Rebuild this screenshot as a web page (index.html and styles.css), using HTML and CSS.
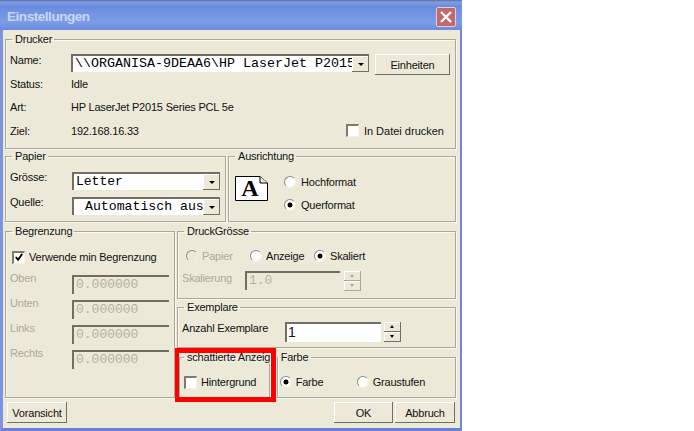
FILE: index.html
```html
<!DOCTYPE html>
<html lang="de">
<head>
<meta charset="utf-8">
<title>Einstellungen</title>
<link rel="stylesheet" href="styles.css">
</head>
<body>
<div class="window">
  <div class="titlebar">
    <span class="title">Einstellungen</span>
    <span class="close"><svg width="14" height="14" viewBox="0 0 14 14"><path d="M2 2 12 12M12 2 2 12" stroke="#fff" stroke-width="2.4" fill="none"/></svg></span>
  </div>
  <div class="content">
    <fieldset class="group drucker">
      <legend>Drucker</legend>
      <div class="drucker-grid">
        <span class="lbl lift">Name:</span>
        <div class="name-row">
          <div class="combo name-combo"><span class="combo-text mono14">\\ORGANISA-9DEAA6\HP LaserJet P2015</span><span class="arrow"><i class="tri"></i></span></div>
          <span class="btn einheiten">Einheiten</span>
        </div>
        <span class="lbl up1">Status:</span><span class="up1">Idle</span>
        <span class="lbl up1">Art:</span><span class="up1">HP LaserJet P2015 Series PCL 5e</span>
        <span class="lbl">Ziel:</span>
        <div class="ziel-row"><span>192.168.16.33</span><span class="check-item datei"><i class="check"></i>In Datei drucken</span></div>
      </div>
    </fieldset>
    <div class="row-two">
      <fieldset class="group papier">
        <legend>Papier</legend>
        <div class="papier-grid">
          <span class="lbl lift">Grösse:</span>
          <div class="combo paper-combo"><span class="combo-text mono13">Letter</span><span class="arrow"><i class="tri"></i></span></div>
          <span class="lbl lift">Quelle:</span>
          <div class="combo paper-combo"><span class="combo-text mono13 indent">Automatisch aus</span><span class="arrow"><i class="tri"></i></span></div>
        </div>
      </fieldset>
      <fieldset class="group ausrichtung">
        <legend>Ausrichtung</legend>
        <div class="aus-row">
          <svg class="page-icon" width="33" height="25" viewBox="0 0 33 25"><path d="M.5.5H25L32.5 7V24.5H.5Z" fill="#fff" stroke="#000"/><path d="M25 .5V7H32.5" fill="#ece9d8" stroke="#000"/><text x="15" y="20" text-anchor="middle" class="page-a">A</text></svg>
          <div class="aus-options">
            <span class="radio-item"><i class="radio"></i>Hochformat</span>
            <span class="radio-item"><i class="radio on"></i>Querformat</span>
          </div>
        </div>
      </fieldset>
    </div>
    <div class="row-three">
      <fieldset class="group begrenzung">
        <legend>Begrenzung</legend>
        <div class="check-item min"><i class="check checked"><svg width="11" height="11" viewBox="0 0 11 11"><path d="M2 5 4.5 8 9 1.5" stroke="#000" stroke-width="2" fill="none"/></svg></i>Verwende min Begrenzung</div>
        <div class="bounds">
          <span class="lbl lift off">Oben</span><span class="field off-field">0.000000</span>
          <span class="lbl lift off">Unten</span><span class="field off-field">0.000000</span>
          <span class="lbl lift off">Links</span><span class="field off-field">0.000000</span>
          <span class="lbl lift off">Rechts</span><span class="field off-field">0.000000</span>
        </div>
      </fieldset>
      <div class="right-col">
        <fieldset class="group druck">
          <legend>DruckGrösse</legend>
          <div class="druck-radios">
            <span class="radio-item off w-papier"><i class="radio dis"></i>Papier</span>
            <span class="radio-item w-anzeige"><i class="radio"></i>Anzeige</span>
            <span class="radio-item"><i class="radio on"></i>Skaliert</span>
          </div>
          <div class="skal-row">
            <span class="lbl off skal-lbl">Skalierung</span>
            <span class="field off-field skal">1.0</span>
            <span class="spin dis-spin"><i class="up"></i><i class="down"></i></span>
          </div>
        </fieldset>
        <fieldset class="group exemplare">
          <legend>Exemplare</legend>
          <div class="ex-row">
            <span class="ex-lbl">Anzahl Exemplare</span>
            <span class="field ex-field">1</span>
            <span class="spin"><i class="up"></i><i class="down"></i></span>
          </div>
        </fieldset>
        <div class="bottom-row">
          <fieldset class="group schatt">
            <legend>schattierte Anzeig</legend>
            <span class="check-item hg"><i class="check"></i>Hintergrund</span>
          </fieldset>
          <fieldset class="group farbe">
            <legend>Farbe</legend>
            <div class="farbe-row">
              <span class="radio-item w-farbe"><i class="radio on"></i>Farbe</span>
              <span class="radio-item"><i class="radio"></i>Graustufen</span>
            </div>
          </fieldset>
        </div>
      </div>
    </div>
    <div class="footer">
      <span class="btn voransicht">Voransicht</span>
      <div class="footer-right">
        <span class="btn ok">OK</span>
        <span class="btn abbruch">Abbruch</span>
      </div>
    </div>
  </div>
  <div class="highlight"></div>
</div>
</body>
</html>
```
FILE: styles.css
```css
* { box-sizing: border-box; }
html, body { margin: 0; background: #fff; }
body { font: 11px/14px "Liberation Sans", Arial, sans-serif; letter-spacing: -.2px; color: #111; }
i { display: block; font-style: normal; }

.window {
  position: relative;
  width: 462px;
  height: 431px;
  background: #ece9d8;
  border-left: 3px solid #7c93e0;
  border-right: 2px solid #6f86d8;
  border-bottom: 3px solid #6a80d4;
}
.titlebar {
  height: 30px;
  margin-left: -3px;
  margin-right: -2px;
  display: flex;
  align-items: center;
  justify-content: space-between;
  padding: 3px 6px 0 7px;
  background: linear-gradient(#5f6f95 0, #7f9ce6 2px, #6a8ce0 6px, #7b9de6 22px, #6c8ade 30px);
}
.title { font: bold 13.5px "Liberation Sans", Arial, sans-serif; letter-spacing: -.45px; color: #c9d8f2; }
.close {
  width: 20px; height: 20px;
  display: flex; align-items: center; justify-content: center;
  background: #c0696f;
  border: 1px solid #e2cdd6;
  border-radius: 2px;
}
.content { padding: 2px 4px 0 2px; }

.group {
  margin: 0; padding: 0; min-width: 0;
  border: 1px solid #aca899;
  box-shadow: inset 1px 1px 0 #f8f7f0, 1px 1px 0 #f8f7f0;
}
.group legend { margin-left: 6px; padding: 0 2px 0 3px; height: 14px; line-height: 14px; white-space: nowrap; }

.lbl { padding-left: 4px; }
.lift { position: relative; top: -4px; }
.up1 { position: relative; top: -1px; }
.off { color: #aca899; }

.drucker { height: 117px; }
.drucker-grid {
  display: grid;
  grid-template-columns: 65px 1fr;
  grid-template-rows: 19px 23px 23px 23px;
  align-items: center;
  padding-top: 8px;
}
.name-row { display: flex; align-items: flex-start; align-self: start; }
.name-combo { width: 298px; }
.einheiten { width: 75px; height: 21px; margin-left: 6px; }
.ziel-row { display: flex; justify-content: space-between; padding-right: 11px; }
.check-item { display: inline-flex; align-items: center; }
.datei { letter-spacing: 0; }
.check {
  width: 13px; height: 13px; margin-right: 4px; flex: none;
  background: #fff;
  border-top: 2px solid #7d7b6e;
  border-left: 2px solid #7d7b6e;
  border-right: 1px solid #f4f2e8;
  border-bottom: 1px solid #f4f2e8;
}
.datei .check { margin-right: 5px; }
.check.checked { display: flex; align-items: center; justify-content: center; }

.combo {
  display: flex;
  height: 18px;
  background: #fff;
  border-top: 2px solid #716f64;
  border-left: 2px solid #716f64;
  overflow: hidden;
  flex: none;
}
.combo-text { flex: 1; min-width: 0; overflow: hidden; white-space: nowrap; padding-left: 2px; line-height: 17px; color: #000; letter-spacing: 0; }
.mono14 { font: 13.33px/16px "Liberation Mono", "Courier New", monospace; }
.mono13 { font: 13px/16px "Liberation Mono", "Courier New", monospace; }
.indent { padding-left: 11px; font-size: 13.2px; }
.arrow {
  flex: none; width: 17px; height: 16px;
  display: flex; align-items: center; justify-content: center;
  background: #ece9d8;
  box-shadow: inset -1px -1px #716f64, inset 1px 1px #fff;
}
.tri { width: 0; height: 0; border-left: 3px solid transparent; border-right: 3px solid transparent; border-top: 3px solid #000; }

.btn {
  display: flex; align-items: center; justify-content: center;
  background: #ece9d8;
  box-shadow: inset -1px -1px #716f64, inset 1px 1px #fff;
  color: #111;
}

.row-two { display: flex; gap: 2px; height: 73px; }
.papier { width: 221px; height: 73px; }
.ausrichtung { width: 228px; height: 73px; }
.ausrichtung legend { padding-left: 3px; }
.papier-grid {
  display: grid;
  grid-template-columns: 66px 148px;
  grid-auto-rows: 25px;
  align-items: start;
  padding-top: 9px;
}
.papier-grid .lbl { top: 0; margin-top: -2px; }
.paper-combo { width: 148px; }
.aus-row { display: flex; align-items: flex-start; padding: 13px 0 0 6px; }
.page-icon { flex: none; }
.page-a { font: bold 24px "Liberation Serif", serif; letter-spacing: 0; fill: #000; }
.aus-options { display: flex; flex-direction: column; gap: 9px; margin: -1px 0 0 16px; }
.radio-item { display: inline-flex; align-items: center; }
.radio {
  width: 12px; height: 12px; margin-right: 5px; flex: none;
  border-radius: 50%;
  background: #fff;
  border: 1px solid;
  border-color: #8f8d80 #f2f0e6 #f2f0e6 #8f8d80;
}
.radio.on { background: radial-gradient(circle at center, #000 0 2.2px, #fff 2.8px); }
.radio.dis { background: #ece9d8; }

.row-three { display: flex; gap: 2px; margin-top: 2px; height: 174px; }
.begrenzung { width: 170px; height: 174px; }
.min { padding: 12px 0 0 6px; display: flex; }
.bounds {
  display: grid;
  grid-template-columns: 66px 97px;
  grid-auto-rows: 25px;
  align-items: start;
  margin-top: 11px;
}
.field {
  display: block;
  height: 19px;
  background: #fff;
  border-top: 2px solid #716f64;
  border-left: 2px solid #716f64;
  padding-left: 2px;
  font: 13px/16px "Liberation Mono", "Courier New", monospace;
  letter-spacing: 0;
  overflow: hidden;
}
.off-field { background: #ece9d8; color: #b4b1a2; }

.right-col { width: 279px; display: flex; flex-direction: column; }
.druck { height: 75px; }
.druck-radios { display: flex; padding: 11px 0 0 8px; }
.druck-radios .radio { margin-right: 4px; }
.w-papier { width: 64px; }
.w-anzeige { width: 64px; }
.skal-row { display: flex; align-items: flex-start; margin-top: 8px; }
.skal-lbl { width: 67px; padding-left: 4px; margin-top: 0; }
.skal { width: 95px; }
.spin {
  display: flex; flex-direction: column; width: 17px; height: 20px; margin-left: 4px;
}
.spin i {
  flex: 1;
  display: block;
  position: relative;
  background: #ece9d8;
  box-shadow: inset -1px -1px #716f64, inset 1px 1px #fff;
}
.spin i::after {
  content: "";
  position: absolute; left: 6px; top: 3px;
  border-left: 2.5px solid transparent;
  border-right: 2.5px solid transparent;
}
.spin .up::after { border-bottom: 3px solid #000; }
.spin .down::after { border-top: 3px solid #000; }
.dis-spin i { box-shadow: inset -1px -1px #aca899, inset 1px 1px #fff; }
.dis-spin .up::after { border-bottom-color: #aca899; }
.dis-spin .down::after { border-top-color: #aca899; }

.exemplare { height: 48px; margin-top: 1px; }
.ex-row { display: flex; align-items: flex-start; padding-top: 8px; }
.ex-lbl { width: 107px; padding-left: 4px; margin-top: -1px; }
.ex-field { width: 96px; height: 20px; padding-left: 1px; font: 14px/17px "Liberation Sans", Arial, sans-serif; letter-spacing: 0; }
.ex-row .spin { margin-left: 3px; }

.bottom-row { display: flex; margin-top: 2px; padding-left: 2px; gap: 7px; }
.schatt { width: 91px; height: 48px; }
.schatt legend { margin-left: 4px; padding: 0 1px 0 3px; }
.hg { display: flex; padding: 11px 0 0 4px; }
.farbe { width: 180px; height: 48px; }
.farbe legend { margin-left: 0; padding: 0 3px; }
.farbe-row { display: flex; padding: 11px 0 0 2px; }
.farbe-row .radio { margin-right: 4px; }
.w-farbe { width: 77px; }

.footer { display: flex; justify-content: space-between; align-items: flex-start; margin-top: 4px; padding: 0 1px 0 2px; }
.footer .btn { height: 21px; }
.voransicht { width: 60px; }
.footer-right { display: flex; gap: 2px; }
.ok { width: 59px; }
.abbruch { width: 60px; }

.highlight {
  position: absolute;
  left: 172px; top: 348px;
  width: 101px; height: 54px;
  border: 5px solid #f00;
  border-left-width: 4px;
}
```
